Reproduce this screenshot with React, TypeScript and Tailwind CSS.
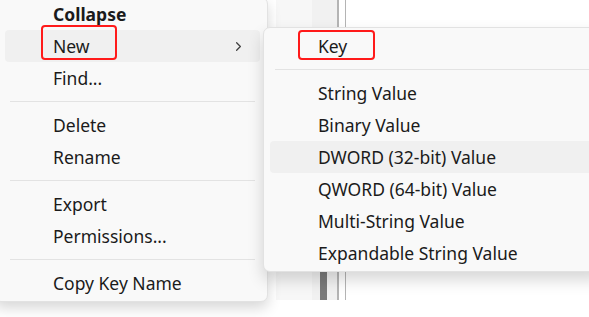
import { ChevronRight } from "lucide-react";

type Item = { label: string; bold?: boolean; sep?: boolean; hover?: boolean; sub?: boolean; mark?: string };

const leftItems: Item[] = [
  { label: "Collapse", bold: true },
  { label: "New", hover: true, sub: true, mark: "left-[-12px] right-[-27px] top-[-8px] bottom-[-1px]" },
  { label: "Find..." },
  { label: "", sep: true },
  { label: "Delete" },
  { label: "Rename" },
  { label: "", sep: true },
  { label: "Export" },
  { label: "Permissions..." },
  { label: "", sep: true },
  { label: "Copy Key Name" },
];

const rightItems: Item[] = [
  { label: "Key", mark: "left-[-20px] right-[-28px] top-[-3px] bottom-[-1px]" },
  { label: "", sep: true },
  { label: "String Value" },
  { label: "Binary Value" },
  { label: "DWORD (32-bit) Value", hover: true },
  { label: "QWORD (64-bit) Value" },
  { label: "Multi-String Value" },
  { label: "Expandable String Value" },
];

function MenuRow({ item, inset }: { item: Item; inset: string }) {
  if (item.sep) {
    return <div className={`h-[15px] flex items-center ${inset}`}><div className="h-px w-full bg-[#e3e3e3]" /></div>;
  }
  return (
    <div className={`h-[32px] flex items-center rounded-[4px] ${item.hover ? "bg-[#f0f0f0]" : ""} ${inset}`}>
      <span className={`${item.bold ? "font-bold" : ""} relative`}>
        {item.label}
        {item.mark && <span className={`absolute border-2 border-[#ff1a1a] rounded-[4px] ${item.mark}`} />}
      </span>
      {item.sub && <ChevronRight className="ml-auto mr-[14px] text-[#404040]" size={15} strokeWidth={2} />}
    </div>
  );
}

export default function App() {
  return (
    <div
      className="relative w-[589px] h-[317px] overflow-hidden bg-white text-[#1b1b1b] text-[17.5px]"
      style={{ fontFamily: '"Noto Sans", "Open Sans", sans-serif' }}
    >
      {/* registry window behind the menus */}
      <div className="flex h-[300px]">
        <div className="w-[276px]" />
        <div className="w-[36px] bg-[#f7f7f7]" />
        <div className="w-[25px] bg-[#f1f1f1] flex flex-col justify-end pl-[8px]">
          <div className="w-[7px] h-[30px] bg-[#7a7a7a]" />
        </div>
        <div className="w-[2px] bg-[#b4b4b4]" />
        <div className="w-[6px]" />
        <div className="w-px bg-[#b4b4b4]" />
      </div>

      {/* context menu */}
      <div className="absolute left-[-6px] top-[-3px] w-[274px] h-[305px] bg-[#f9f9f9] rounded-[7px] border border-[#e2e2e2] shadow-[0_6px_14px_rgba(0,0,0,0.16)] flex flex-col">
        {leftItems.map((it, i) => (
          <MenuRow key={i} item={it} inset={it.sep ? "pl-[15px] pr-[12px]" : "ml-[10px] mr-[7px] pl-[48px]"} />
        ))}
      </div>

      {/* submenu */}
      <div className="absolute left-[263px] top-[27px] w-[340px] h-[245px] bg-[#f9f9f9] rounded-[7px] border border-[#e2e2e2] shadow-[0_8px_16px_rgba(0,0,0,0.16)] flex flex-col pt-[2px]">
        {rightItems.map((it, i) => (
          <MenuRow key={i} item={it} inset={it.sep ? "pl-[11px]" : "ml-[6px] pl-[48px]"} />
        ))}
      </div>
    </div>
  );
}
